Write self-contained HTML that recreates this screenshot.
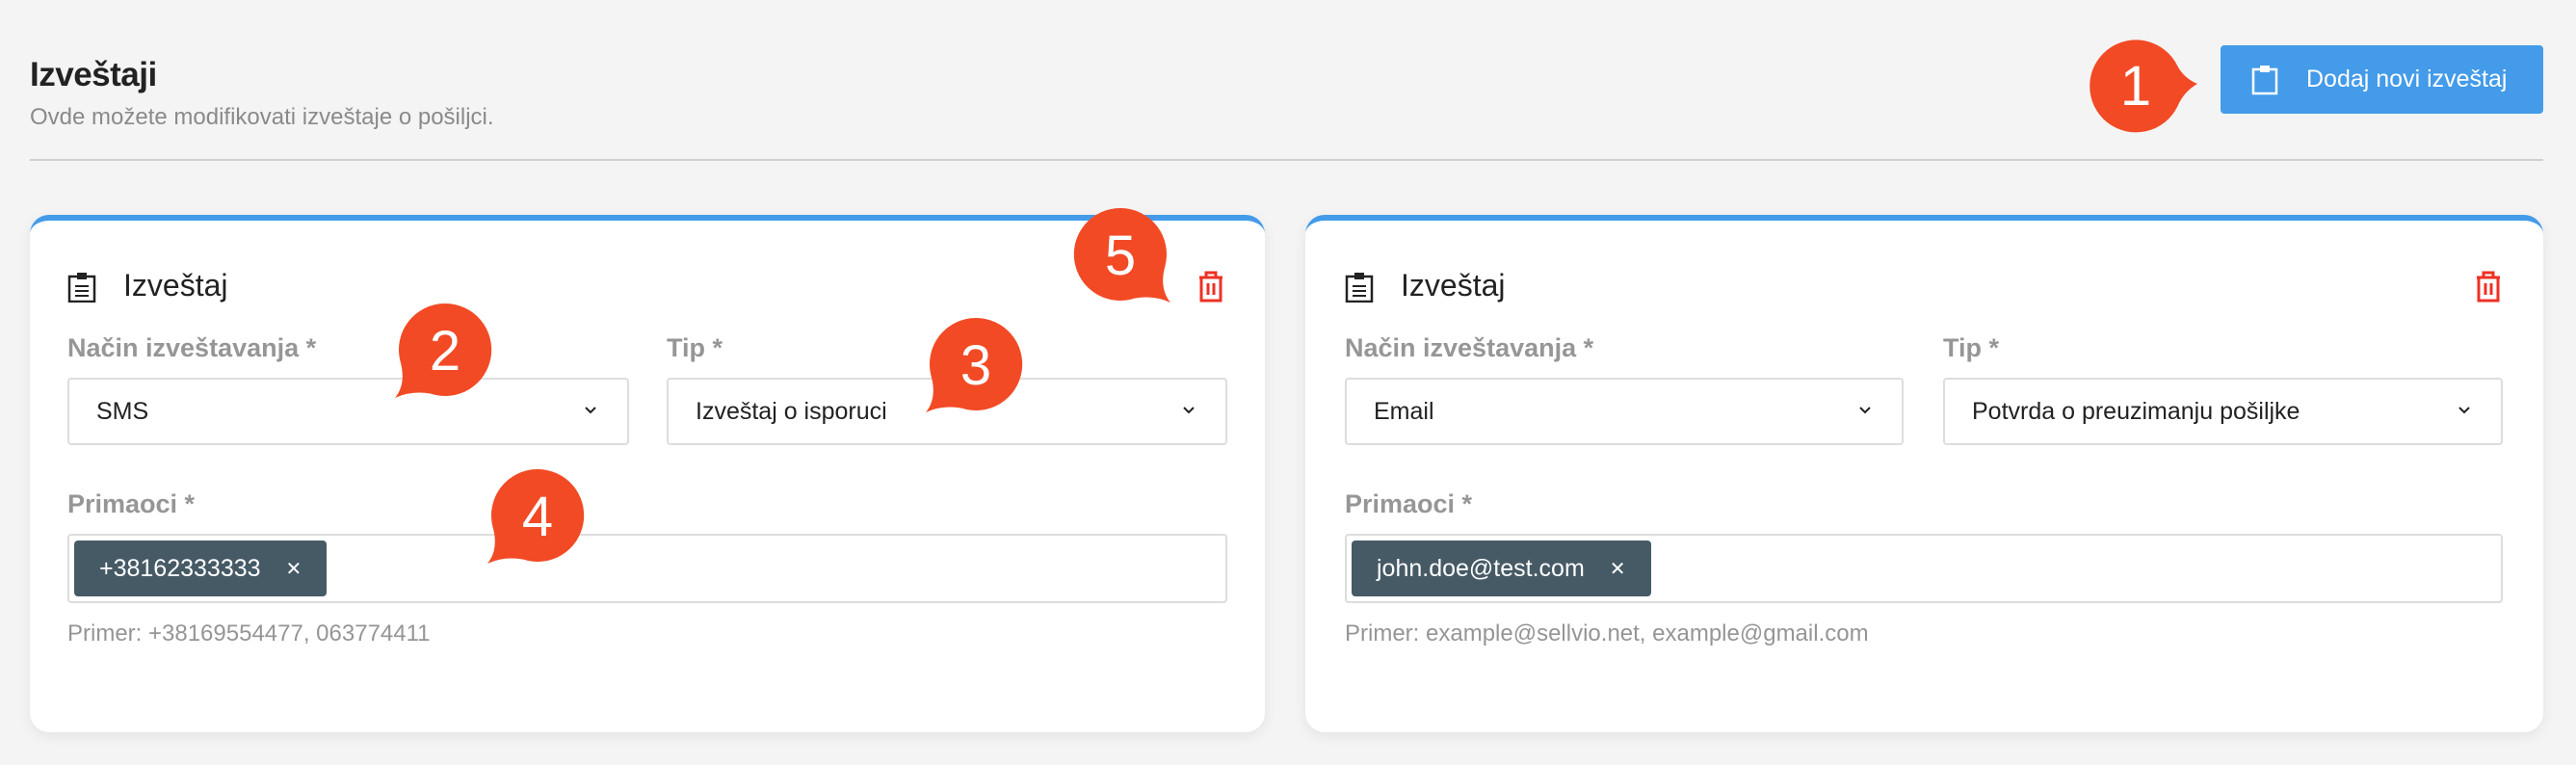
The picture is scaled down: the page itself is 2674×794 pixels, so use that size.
<!DOCTYPE html>
<html><head><meta charset="utf-8"><style>
*{box-sizing:border-box;margin:0;padding:0}
body{width:2674px;height:794px;background:#f4f4f4;font-family:"Liberation Sans",sans-serif;position:relative;overflow:hidden;color:#222}
.abs{position:absolute}
.title{left:31px;top:58px;font-size:35px;font-weight:bold;color:#222;letter-spacing:-0.5px}
.sub{left:31px;top:108px;font-size:24px;color:#8a8a8a}
.hr{left:31px;top:165px;width:2609px;height:2px;background:#d0d0d0}
.btn{left:2305px;top:47px;width:335px;height:71px;background:#439be9;border-radius:4px;color:#fff;font-size:25px;font-weight:500}
.btn .t{position:absolute;left:89px;top:21px}
.card{top:223px;height:537px;background:#fff;border-radius:20px;border-top:6px solid #439be9;box-shadow:0 4px 14px rgba(0,0,0,0.07)}
.ct{font-size:32px;color:#222}
.lbl{font-size:27px;color:#969696;font-weight:bold}
.sel{height:70px;border:2px solid #ddd;border-radius:4px;background:#fff;font-size:25px;color:#222;display:flex;align-items:center;padding-left:28px}
.chev{position:absolute;right:28px;top:22px}
.inp{height:72px;border:2px solid #ddd;border-radius:4px;background:#fff}
.chip{position:absolute;left:5px;top:5px;height:58px;background:#465a66;border-radius:4px;color:#fff;font-size:25px;display:flex;align-items:center;padding:0 26px}
.chip span{font-size:20px;margin-left:26px}
.hint{font-size:24px;color:#959595}
.co text{font-family:"Liberation Sans",sans-serif;font-size:58px;fill:#fff}
</style></head><body>
<div class="abs title">Izveštaji</div>
<div class="abs sub">Ovde možete modifikovati izveštaje o pošiljci.</div>
<div class="abs hr"></div>
<div class="abs btn"><svg class="abs" style="left:31px;top:19px" width="30" height="33" viewBox="0 0 30 33"><rect x="3" y="6" width="24" height="25" fill="none" stroke="#fff" stroke-width="2.5"/><rect x="10" y="2" width="10" height="7" fill="#fff"/></svg><span class="t">Dodaj novi izveštaj</span></div>

<!-- card 1 -->
<div class="abs card" style="left:31px;width:1282px"></div>
<svg class="abs" style="left:70px;top:282px" width="30" height="32" viewBox="0 0 30 32"><rect x="2" y="5" width="26" height="26" fill="none" stroke="#222" stroke-width="2.5"/><rect x="10" y="1" width="10" height="7" fill="#222"/><path d="M8 15h14M8 20h14M8 25h14" stroke="#222" stroke-width="2"/></svg>
<div class="abs ct" style="left:128px;top:278px">Izveštaj</div>
<svg class="abs" style="left:1242px;top:280px" width="30" height="34" viewBox="0 0 30 34"><path d="M3 8h24M10 8V3h10v5M5 8v24h20V8M12 14v12M18 14v12" fill="none" stroke="#ee3124" stroke-width="3"/></svg>
<div class="abs lbl" style="left:70px;top:346px">Način izveštavanja *</div>
<div class="abs lbl" style="left:692px;top:346px">Tip *</div>
<div class="abs sel" style="left:70px;top:392px;width:583px">SMS<svg class="chev" width="20" height="20" viewBox="0 0 20 20"><path d="M5 7l5 5 5-5" fill="none" stroke="#222" stroke-width="2"/></svg></div>
<div class="abs sel" style="left:692px;top:392px;width:582px">Izveštaj o isporuci<svg class="chev" width="20" height="20" viewBox="0 0 20 20"><path d="M5 7l5 5 5-5" fill="none" stroke="#222" stroke-width="2"/></svg></div>
<div class="abs lbl" style="left:70px;top:508px">Primaoci *</div>
<div class="abs inp" style="left:70px;top:554px;width:1204px"><div class="chip">+38162333333<span>✕</span></div></div>
<div class="abs hint" style="left:70px;top:644px">Primer: +38169554477, 063774411</div>

<!-- card 2 -->
<div class="abs card" style="left:1355px;width:1285px"></div>
<svg class="abs" style="left:1396px;top:282px" width="30" height="32" viewBox="0 0 30 32"><rect x="2" y="5" width="26" height="26" fill="none" stroke="#222" stroke-width="2.5"/><rect x="10" y="1" width="10" height="7" fill="#222"/><path d="M8 15h14M8 20h14M8 25h14" stroke="#222" stroke-width="2"/></svg>
<div class="abs ct" style="left:1454px;top:278px">Izveštaj</div>
<svg class="abs" style="left:2568px;top:280px" width="30" height="34" viewBox="0 0 30 34"><path d="M3 8h24M10 8V3h10v5M5 8v24h20V8M12 14v12M18 14v12" fill="none" stroke="#ee3124" stroke-width="3"/></svg>
<div class="abs lbl" style="left:1396px;top:346px">Način izveštavanja *</div>
<div class="abs lbl" style="left:2017px;top:346px">Tip *</div>
<div class="abs sel" style="left:1396px;top:392px;width:580px">Email<svg class="chev" width="20" height="20" viewBox="0 0 20 20"><path d="M5 7l5 5 5-5" fill="none" stroke="#222" stroke-width="2"/></svg></div>
<div class="abs sel" style="left:2017px;top:392px;width:581px">Potvrda o preuzimanju pošiljke<svg class="chev" width="20" height="20" viewBox="0 0 20 20"><path d="M5 7l5 5 5-5" fill="none" stroke="#222" stroke-width="2"/></svg></div>
<div class="abs lbl" style="left:1396px;top:508px">Primaoci *</div>
<div class="abs inp" style="left:1396px;top:554px;width:1202px"><div class="chip">john.doe@test.com<span>✕</span></div></div>
<div class="abs hint" style="left:1396px;top:644px">Primer: example@sellvio.net, example@gmail.com</div>

<!-- callouts -->
<svg class="abs co" style="left:2167px;top:39px" width="116" height="100" viewBox="0 0 116 100"><path d="M93.5 29.7Q100 42 114 48Q100 56 93.5 71.1A48 48 0 1 1 93.5 29.7Z" fill="#f24a25"/><text x="50" y="70" text-anchor="middle">1</text></svg>
<svg class="abs co" style="left:402px;top:313px" width="110" height="102" viewBox="0 0 110 102"><path d="M60 2A48 48 0 1 1 45.2 95.6Q25 92 8 100Q20 85 13.6 62.4A48 48 0 0 1 60 2Z" fill="#f24a25"/><text x="60" y="71" text-anchor="middle">2</text></svg>
<svg class="abs co" style="left:953px;top:328px" width="110" height="102" viewBox="0 0 110 102"><path d="M60 2A48 48 0 1 1 45.2 95.6Q25 92 8 100Q20 85 13.6 62.4A48 48 0 0 1 60 2Z" fill="#f24a25"/><text x="60" y="71" text-anchor="middle">3</text></svg>
<svg class="abs co" style="left:498px;top:485px" width="110" height="102" viewBox="0 0 110 102"><path d="M60 2A48 48 0 1 1 45.2 95.6Q25 92 8 100Q20 85 13.6 62.4A48 48 0 0 1 60 2Z" fill="#f24a25"/><text x="60" y="71" text-anchor="middle">4</text></svg>
<svg class="abs co" style="left:1113px;top:214px" width="110" height="102" viewBox="0 0 110 102"><path d="M50 2A48 48 0 1 0 64.8 95.6Q85 92 102 100Q90 85 96.4 62.4A48 48 0 0 0 50 2Z" fill="#f24a25"/><text x="50" y="71" text-anchor="middle">5</text></svg>
</body></html>
